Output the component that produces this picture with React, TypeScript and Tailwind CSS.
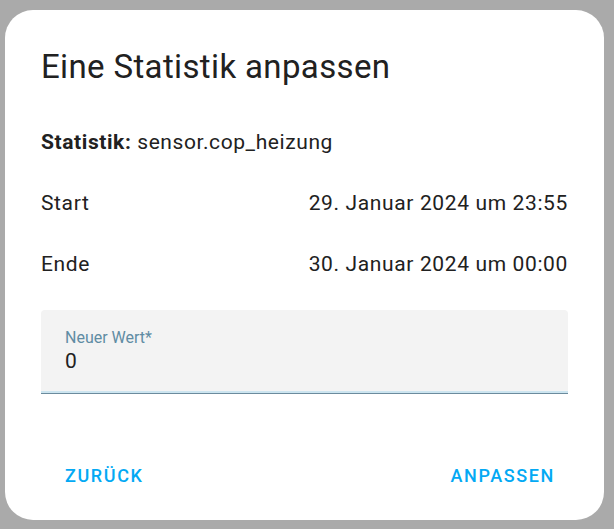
import React from 'react'

const rows = [
    { label: 'Start', value: '29. Januar 2024 um 23:55' },
    { label: 'Ende', value: '30. Januar 2024 um 00:00' },
]

export default function App() {
    return (
        <div className="min-h-screen bg-[#aaaaaa] pt-[10px] pl-[5px] font-['Roboto',sans-serif]">
            <div className="flex h-[510px] w-[599px] flex-col rounded-[28px] bg-white px-9 text-[#212121]">
                <h2 className="mt-[37px] text-[33px] leading-[40px] font-normal tracking-[0.011em]">Eine Statistik anpassen</h2>

                <p className="mt-[41px] text-[21px] leading-[28px] tracking-[0.028em]">
                    <b className="font-bold">Statistik:</b> sensor.cop_heizung
                </p>

                {rows.map((row, index) => (
                    <div key={index} className="mt-[33px] flex justify-between text-[21px] leading-[28px] tracking-[0.03em]">
                        <span>{row.label}</span>
                        <span>{row.value}</span>
                    </div>
                ))}

                <div className="mt-[32px]">
                    <div className="h-[81px] rounded-t-[4px] bg-[#f3f3f3] px-6 pt-[20px]">
                        <div className="text-[16px] leading-[16px] text-[#5f8ca3]">Neuer Wert*</div>
                        <div className="mt-px text-[21px] leading-[28px]">0</div>
                    </div>
                    <div className="h-[2px] bg-[#cde5f0]"></div>
                    <div className="h-px bg-[#6b8b9d]"></div>
                </div>

                <div className="mt-auto mb-[32px] ml-6 mr-[13px] flex justify-between text-[18px] leading-[24px] font-medium tracking-[0.09em] text-[#03a9f4]">
                    <button>ZURÜCK</button>
                    <button>ANPASSEN</button>
                </div>
            </div>
        </div>
    )
}
